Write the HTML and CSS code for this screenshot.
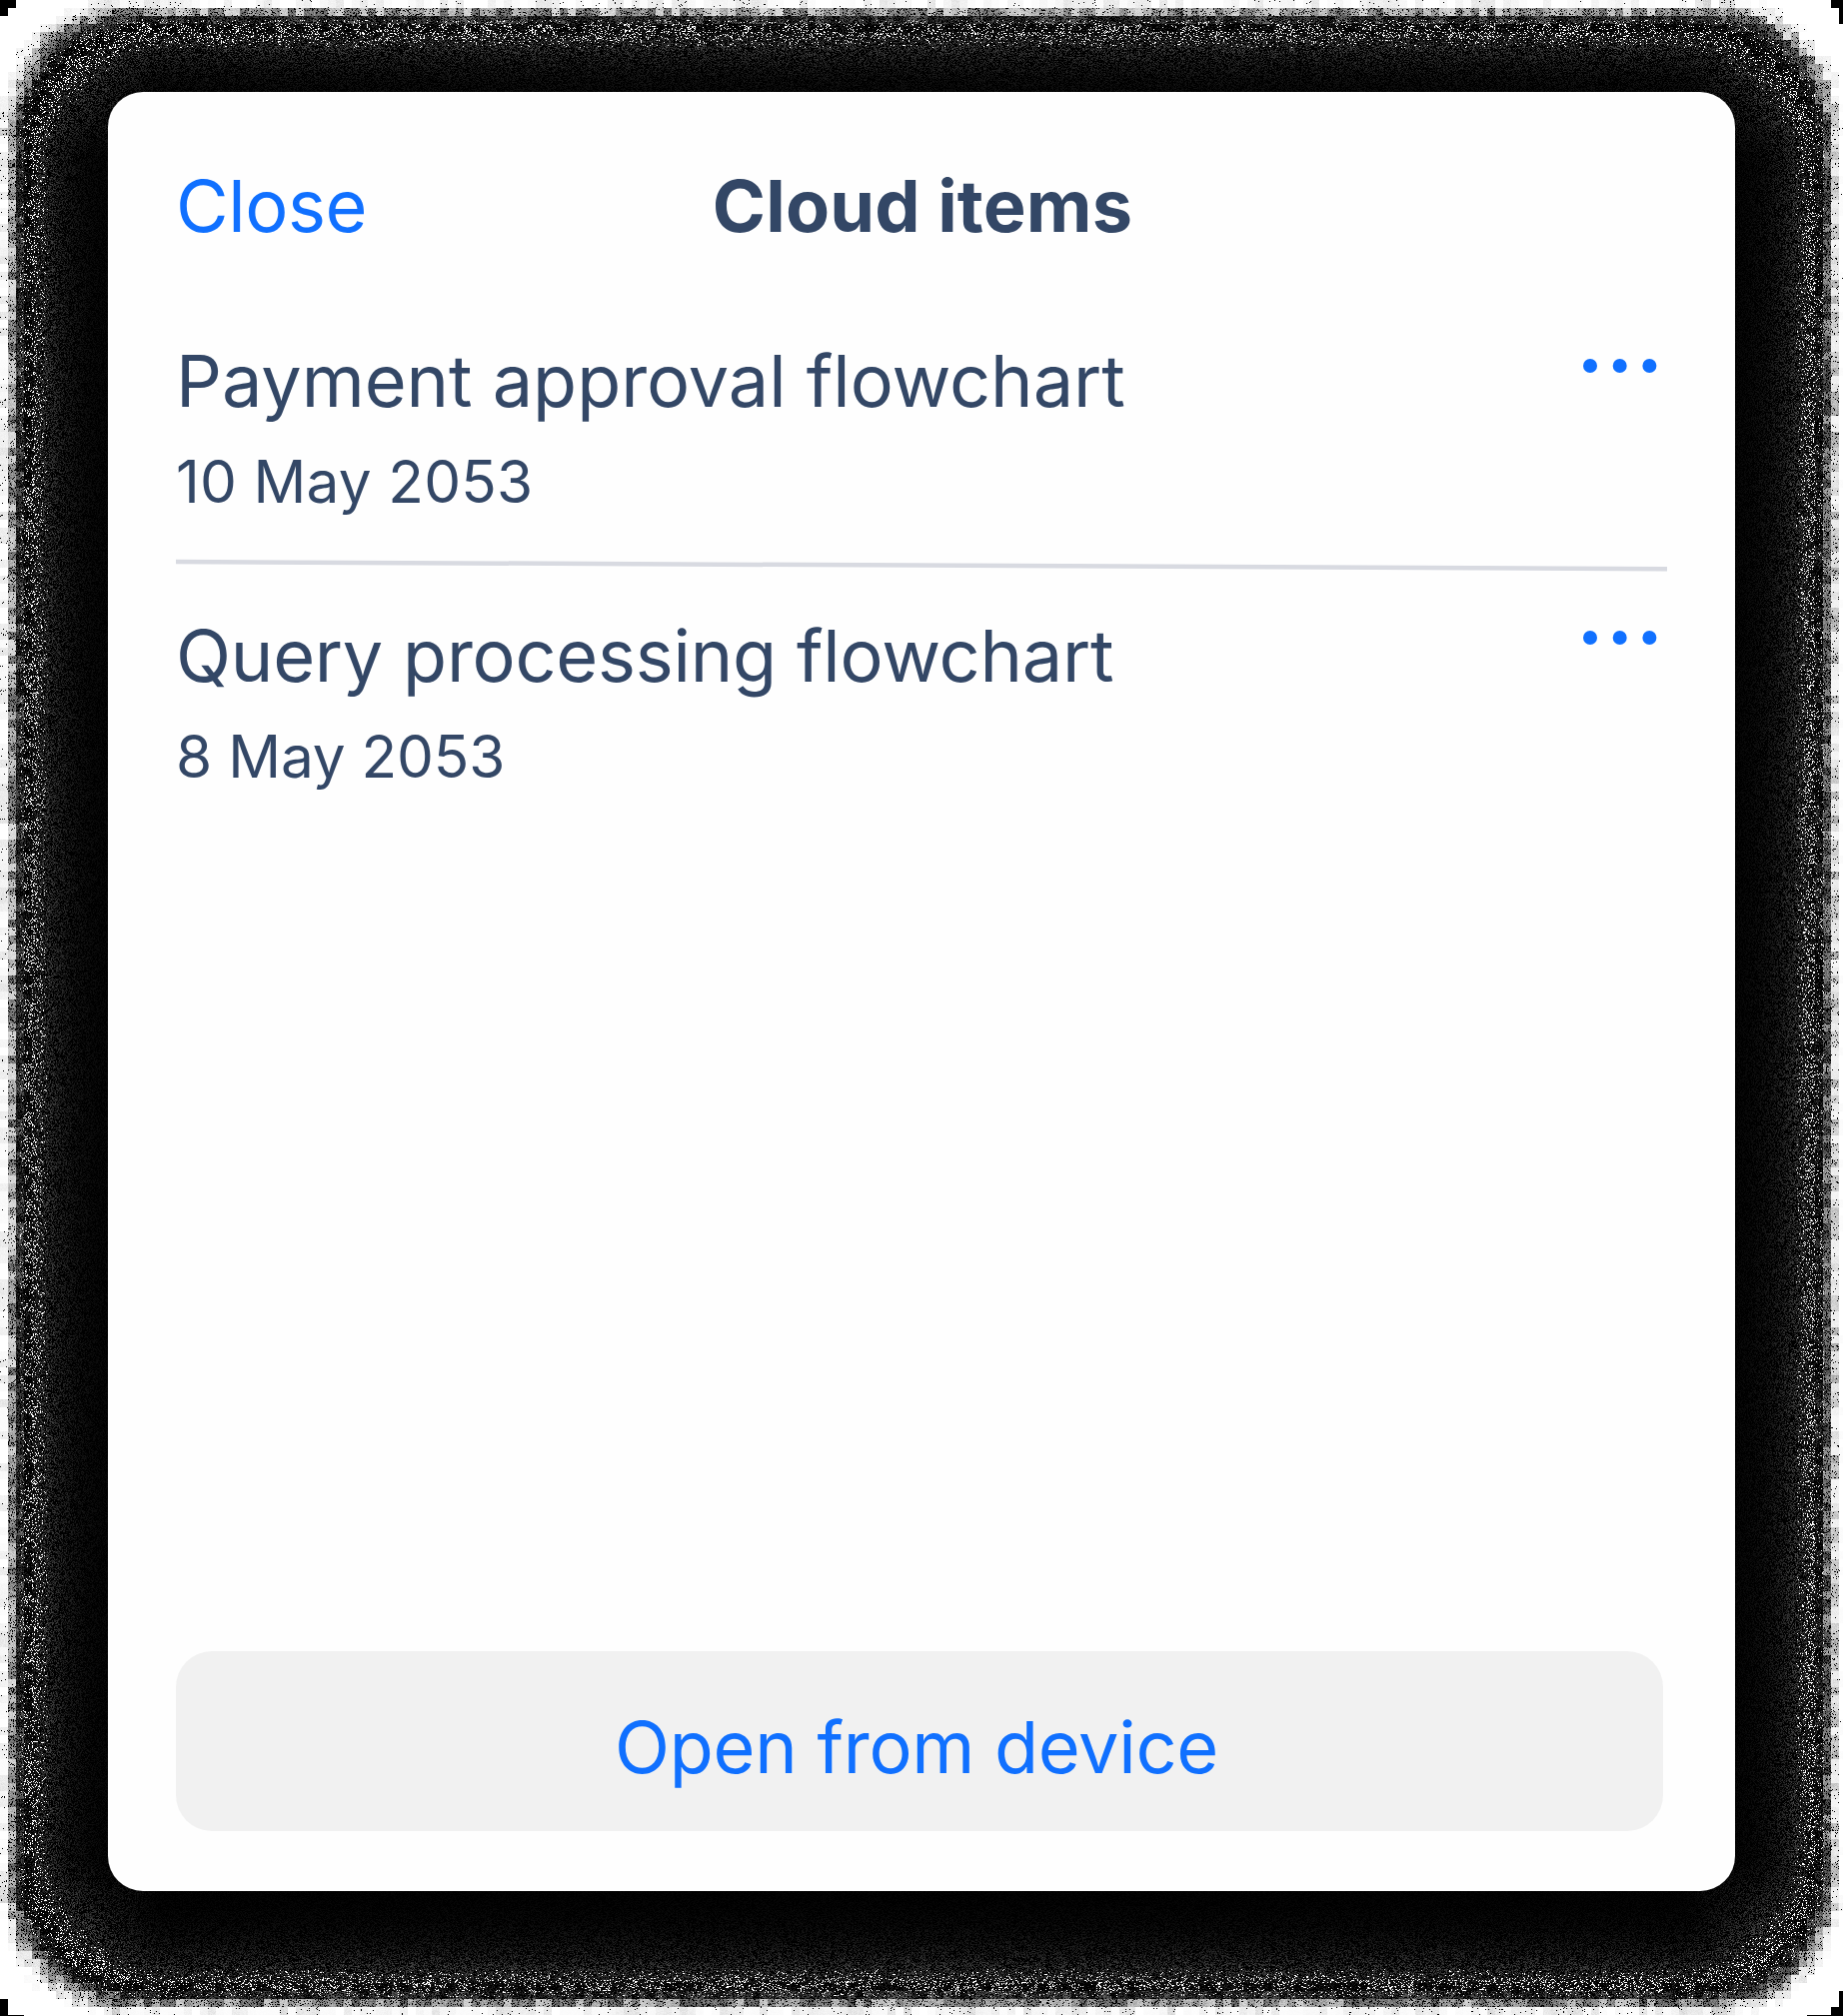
FILE: index.html
```html
<!DOCTYPE html>
<html lang="en">
<head>
<meta charset="utf-8">
<title>Cloud items</title>
<link rel="stylesheet" href="styles.css">
</head>
<body>
<canvas class="grain" width="1844" height="2017" aria-hidden="true"></canvas>
<main class="sheet">
  <header class="sheet-header">
    <a class="close">Close</a>
    <h1 class="title">Cloud items</h1>
  </header>
  <ul class="items">
    <li class="item">
      <div class="item-text">
        <div class="item-name">Payment approval flowchart</div>
        <div class="item-date">10 May 2053</div>
      </div>
      <svg class="more" viewBox="0 0 74 14" role="img" aria-label="More"><circle cx="7" cy="7" r="7"/><circle cx="36.7" cy="7" r="7"/><circle cx="66.4" cy="7" r="7"/></svg>
    </li>
    <li class="divider"><svg class="divider-line" viewBox="0 0 1492 12" aria-hidden="true"><path d="M0 2 L1492 9.3"/></svg></li>
    <li class="item item-query">
      <div class="item-text">
        <div class="item-name">Query processing flowchart</div>
        <div class="item-date">8 May 2053</div>
      </div>
      <svg class="more" viewBox="0 0 74 14" role="img" aria-label="More"><circle cx="7" cy="7" r="7"/><circle cx="36.7" cy="7" r="7"/><circle cx="66.4" cy="7" r="7"/></svg>
    </li>
  </ul>
  <button class="open">Open from device</button>
</main>
<script src="grain.js"></script>
</body>
</html>
```
FILE: styles.css
```css
* { box-sizing: border-box; }
body {
  margin: 0;
  width: 1844px;
  height: 2017px;
  padding: 92px 108px 125px;
  overflow: hidden;
  background: #fff;
  color: #334766;
  font-family: Inter, "Liberation Sans", sans-serif;
  font-size: 72px;
}
.grain { position: absolute; left: 0; top: 0; z-index: -1; }
.sheet {
  display: flex;
  flex-direction: column;
  height: 1800px;
  padding: 69px 68px 60px;
  border-radius: 35px;
  background: #fefefe;
}
.sheet-header {
  display: grid;
  grid-template-columns: 1fr auto 1fr;
  align-items: center;
  height: 88px;
}
.close { color: #1070ff; letter-spacing: -0.4px; }
.title { margin: 0; padding-left: 2px; font-size: 72px; font-weight: 700; letter-spacing: 0.2px; }
.items { margin: 0; padding: 88px 0 0; list-style: none; }
.item { display: flex; justify-content: space-between; }
.item-text { display: flex; flex-direction: column; white-space: nowrap; }
.item-name { line-height: 88px; letter-spacing: -0.06px; }
.item-date { margin-top: 21px; font-size: 58.5px; line-height: 72px; letter-spacing: 0.15px; }
.item-query .item-name { letter-spacing: -0.25px; }
.item-query .item-date { letter-spacing: -0.2px; }
.more { width: 74px; height: 14px; margin: 22px 10px 0 0; fill: #1070ff; }
.item-query .more { margin-top: 19px; }
.divider { height: 94px; padding-top: 42px; }
.divider-line { display: block; width: 1492px; height: 12px; overflow: visible; stroke: #d8dae1; stroke-width: 4.5; }
.open {
  width: 1488px;
  height: 180px;
  margin-top: auto;
  padding: 10px 6px 0 0;
  border: 0;
  border-radius: 36px;
  background: #f1f1f1;
  color: #1070ff;
  font: inherit;
  letter-spacing: -0.3px;
}
```
FILE: grain.js
```js
// Grainy dark frame that surrounds the sheet, built from 8px tiles plus fine speckle.
(function () {
  var canvas = document.querySelector('.grain');
  var ctx = canvas.getContext('2d');
  var W = canvas.width, H = canvas.height, R = 160, T = 8;
  var img = ctx.createImageData(W, H), px = img.data;
  var seed = 12345;
  function rnd() {
    seed = (seed + 0x6D2B79F5) | 0;
    var t = Math.imul(seed ^ (seed >>> 15), 1 | seed);
    t = (t + Math.imul(t ^ (t >>> 7), 61 | t)) ^ t;
    return ((t ^ (t >>> 14)) >>> 0) / 4294967296;
  }
  // Distance inwards from the edge of a rounded frame; the fade widens on the diagonals.
  function depth(x, y) {
    var ex = Math.min(x, W - x), ey = Math.min(y, H - y);
    if (ex < R && ey < R) {
      var a = R - ex, b = R - ey, h = Math.hypot(a, b);
      return 33 + (R - h - 33) * (1 - 0.8 * a * b / (h * h));
    }
    return Math.min(ex, ey);
  }
  // Base brightness of a tile at the given depth.
  var stops = [[0, 255], [4, 250], [8, 228], [12, 165], [16, 100], [20, 55], [24, 22], [28, 0]];
  function tone(d) {
    if (d <= 0) return 255;
    for (var i = 1; i < stops.length; i++) {
      var p = stops[i - 1], q = stops[i];
      if (d < q[0]) return p[1] + (q[1] - p[1]) * (d - p[0]) / (q[0] - p[0]);
    }
    return 0;
  }
  var cols = Math.ceil(W / T), rows = Math.ceil(H / T), tiles = [];
  for (var j = 0; j < rows; j++) {
    for (var i = 0; i < cols; i++) {
      var td = depth(i * T + 4, j * T + 4);
      tiles.push(td < 40 ? tone(td + (rnd() - 0.5) * 7) : 0);
    }
  }
  for (var y = 0; y < H; y++) {
    for (var x = 0; x < W; x++) {
      var v = 0;
      if (x < 145 || x > W - 145 || y < 130 || y > H - 160) {
        var r = rnd(), n = rnd();
        var d = depth(x, y), base = tiles[(y >> 3) * cols + (x >> 3)];
        if (base >= 252) v = 255;
        else if (base > 0) {
          v = base + (n - 0.5) * Math.min(60, (255 - base) * 0.6);
          if (r < Math.min(0.28, (255 - base) / 650)) v = 0;
          else if (d > 19 && r > 0.94) v = 255;
        } else {
          // White specks thin out while a soft grey grain takes over.
          var fade = Math.max(0, Math.min(1, (48 - d) / 16));
          if (r < 0.2 * fade) v = 255;
          else if (r > 0.45) v = (0.2 + n * 0.8) * 105 * Math.exp(-Math.max(0, d - 40) / 27) * (1 - 0.7 * fade);
        }
      }
      var p = (y * W + x) * 4;
      px[p] = px[p + 1] = px[p + 2] = v;
      px[p + 3] = 255;
    }
  }
  ctx.putImageData(img, 0, 0);
  // Solid stepped tiles in the outermost corners.
  ctx.fillStyle = '#000';
  [
    [0, 0, 16, 8], [0, 8, 8, 8],
    [1832, 0, 12, 8], [1840, 8, 4, 16],
    [0, 2000, 8, 17], [8, 2016, 16, 1],
    [1840, 1992, 4, 25], [1832, 2008, 8, 9], [1808, 2016, 24, 1]
  ].forEach(function (b) { ctx.fillRect(b[0], b[1], b[2], b[3]); });
}());
```
